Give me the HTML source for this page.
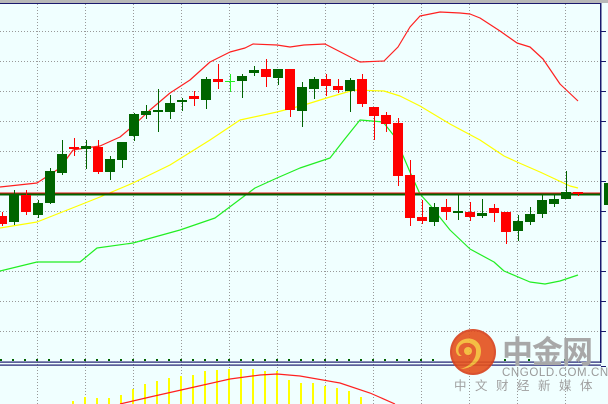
<!DOCTYPE html>
<html><head><meta charset="utf-8"><style>
html,body{margin:0;padding:0;background:#f0ffff;width:608px;height:404px;overflow:hidden}
svg{display:block}
</style></head><body>
<svg width="608" height="404" viewBox="0 0 608 404" xmlns="http://www.w3.org/2000/svg" font-family="Liberation Sans, Noto Sans CJK SC, sans-serif">
<rect width="608" height="404" fill="#f0ffff"/>
<rect x="0" y="0" width="608" height="3" fill="#b8b8b8"/>
<rect x="0" y="3" width="601" height="1" fill="#1a1a6e"/>
<g stroke="#999" stroke-width="1" stroke-dasharray="1,2">
<path d="M0 31.5H600M0 61.5H600M0 91.5H600M0 121.5H600M0 151.5H600M0 181.5H600M0 211.5H600M0 241.5H600M0 271.5H600M0 301.5H600M0 331.5H600"/>
<path d="M37.5 4V404M85.5 4V404M133.5 4V404M181.5 4V404M229.5 4V404M277.5 4V404M325.5 4V404M373.5 4V404M421.5 4V404M469.5 4V404M517.5 4V404M565.5 4V404"/>
</g>
<g fill="none" stroke-width="1.2" stroke-linejoin="round">
<polyline stroke="#ff2020" points="0,187 37,183 60,168 73,150 85,148 100,146 120,137 133,126 150,110 170,93 190,80 210,62 230,52 245,48 253,44 277,45 290,47 304,45 325,44 360,62 384,61 398,47 410,27 420,16 440,12 460,13 470,14 480,18 500,31 517,43 530,47 543,59 560,84 578,101"/>
<polyline stroke="#ffff00" points="0,228 37,222 85,203 100,197 133,183 170,165 210,140 240,120 277,112 304,105 330,97 354,90 384,91 400,96 420,106 450,124 480,140 504,156 517,162 540,172 570,186 578,188"/>
<polyline stroke="#22ee22" points="0,271 37,262 80,262 97,248 133,243 180,230 215,218 235,203 255,188 277,178 300,168 330,158 344,140 360,120 383,122 395,137 410,172 420,194 430,205 450,230 470,249 494,262 504,271 530,282 545,284 560,281 578,275"/>
</g>
<rect x="0" y="192.5" width="600" height="1" fill="#e01010"/>
<rect x="0" y="193.5" width="600" height="2" fill="#006400"/>
<g>
<g stroke-width="1">
<path stroke="#ff0000" d="M2.5 212V226M26.5 190V215M74.5 138V156M98.5 140V174M194.5 91V106M218.5 64V89M266.5 59V87M290.5 69V117M326.5 74V96M338.5 79V93M362.5 74V107M374.5 107V140M386.5 112V132M398.5 118V186M410.5 160V226M422.5 200V224M446.5 199V220M470.5 202V221M494.5 204V222M506.5 212V244M578.5 192V196"/>
<path stroke="#006400" d="M14.5 190V225M38.5 200V218M50.5 168V204M62.5 140V175M86.5 140V169M110.5 156V180M122.5 142V168M134.5 113V141M146.5 105V119M158.5 89V132M170.5 95V119M182.5 98V111M206.5 77V109M242.5 74V98M254.5 66V76M278.5 69V85M302.5 82V127M314.5 77V99M350.5 78V112M434.5 203V226M458.5 195V220M482.5 199V218M518.5 215V241M530.5 207V225M542.5 195V218M554.5 195V207M566.5 171V199"/>
<path stroke="#22ee22" d="M230.5 74V92"/>
</g>
<g fill="#ff0000">
<rect x="0" y="216" width="7" height="8"/>
<rect x="21" y="195" width="10" height="17"/>
<rect x="69" y="147" width="10" height="2"/>
<rect x="93" y="147" width="10" height="25"/>
<rect x="189" y="96" width="10" height="3"/>
<rect x="213" y="79" width="10" height="3"/>
<rect x="261" y="69" width="10" height="8"/>
<rect x="285" y="69" width="10" height="41"/>
<rect x="321" y="79" width="10" height="7"/>
<rect x="333" y="86" width="10" height="4"/>
<rect x="357" y="79" width="10" height="25"/>
<rect x="369" y="107" width="10" height="9"/>
<rect x="381" y="115" width="10" height="9"/>
<rect x="393" y="123" width="10" height="53"/>
<rect x="405" y="175" width="10" height="43"/>
<rect x="417" y="217" width="10" height="4"/>
<rect x="441" y="207" width="10" height="5"/>
<rect x="465" y="212" width="10" height="5"/>
<rect x="489" y="208" width="10" height="5"/>
<rect x="501" y="212" width="10" height="20"/>
<rect x="573" y="192" width="10" height="2"/>
</g>
<g fill="#006400">
<rect x="9" y="195" width="10" height="27"/>
<rect x="33" y="203" width="10" height="12"/>
<rect x="45" y="171" width="10" height="32"/>
<rect x="57" y="154" width="10" height="19"/>
<rect x="81" y="146" width="10" height="3"/>
<rect x="105" y="159" width="10" height="13"/>
<rect x="117" y="142" width="10" height="18"/>
<rect x="129" y="114" width="10" height="22"/>
<rect x="141" y="111" width="10" height="4"/>
<rect x="153" y="110" width="10" height="2"/>
<rect x="165" y="103" width="10" height="9"/>
<rect x="177" y="100" width="10" height="2"/>
<rect x="201" y="79" width="10" height="21"/>
<rect x="237" y="76" width="10" height="5"/>
<rect x="249" y="70" width="10" height="3"/>
<rect x="273" y="69" width="10" height="9"/>
<rect x="297" y="87" width="10" height="24"/>
<rect x="309" y="79" width="10" height="10"/>
<rect x="345" y="80" width="10" height="11"/>
<rect x="429" y="207" width="10" height="15"/>
<rect x="453" y="211" width="10" height="2"/>
<rect x="477" y="213" width="10" height="3"/>
<rect x="513" y="221" width="10" height="10"/>
<rect x="525" y="214" width="10" height="8"/>
<rect x="537" y="200" width="10" height="14"/>
<rect x="549" y="199" width="10" height="5"/>
<rect x="561" y="192" width="10" height="7"/>
<rect x="604" y="183" width="4" height="22"/>
</g>
<rect x="225" y="81" width="10" height="1" fill="#22ee22"/>
</g>
<rect x="600" y="3" width="1.5" height="360" fill="#1a1a6e"/>
<path stroke="#1a1a6e" stroke-width="1" d="M601 31.5H606M601 61.5H606M601 91.5H606M601 121.5H606M601 151.5H606M601 181.5H606M601 211.5H606M601 241.5H606M601 271.5H606M601 301.5H606M601 331.5H606M601 366.5H606"/>
<rect x="0" y="361.5" width="601" height="1.2" fill="#1a1a6e"/>
<rect x="0" y="364.5" width="601" height="1.2" fill="#1a1a6e"/>
<g fill="#006400">
<rect x="0" y="359" width="2" height="2"/><rect x="12" y="359" width="2" height="2"/><rect x="24" y="359" width="2" height="2"/><rect x="36" y="359" width="2" height="2"/><rect x="48" y="359" width="2" height="2"/><rect x="60" y="359" width="2" height="2"/><rect x="72" y="359" width="2" height="2"/><rect x="84" y="359" width="2" height="2"/><rect x="96" y="359" width="2" height="2"/><rect x="108" y="359" width="2" height="2"/><rect x="120" y="359" width="2" height="2"/><rect x="132" y="359" width="2" height="2"/><rect x="144" y="359" width="2" height="2"/><rect x="156" y="359" width="2" height="2"/><rect x="168" y="359" width="2" height="2"/><rect x="180" y="359" width="2" height="2"/><rect x="192" y="359" width="2" height="2"/><rect x="204" y="359" width="2" height="2"/><rect x="216" y="359" width="2" height="2"/><rect x="228" y="359" width="2" height="2"/><rect x="240" y="359" width="2" height="2"/><rect x="252" y="359" width="2" height="2"/><rect x="264" y="359" width="2" height="2"/><rect x="276" y="359" width="2" height="2"/><rect x="288" y="359" width="2" height="2"/><rect x="300" y="359" width="2" height="2"/><rect x="312" y="359" width="2" height="2"/><rect x="324" y="359" width="2" height="2"/><rect x="336" y="359" width="2" height="2"/><rect x="348" y="359" width="2" height="2"/><rect x="360" y="359" width="2" height="2"/><rect x="372" y="359" width="2" height="2"/><rect x="384" y="359" width="2" height="2"/><rect x="396" y="359" width="2" height="2"/><rect x="408" y="359" width="2" height="2"/><rect x="420" y="359" width="2" height="2"/><rect x="432" y="359" width="2" height="2"/><rect x="504" y="359" width="2" height="2"/><rect x="528" y="359" width="2" height="2"/><rect x="540" y="359" width="2" height="2"/><rect x="564" y="359" width="2" height="2"/>
</g>
<g stroke="#ffff00" stroke-width="2">
<path d="M73 401V404M85 397V404M97 398V404M109 398V404M121 395V404M133 389V404M145 384V404M157 381V404M169 378V404M181 376V404M193 375V404M205 371V404M217 370V404M229 369V404M241 369V404M253 369V404M265 371V404M277 371V404M289 380V404M301 383V404M313 383V404M325 386V404M337 388V404M349 391V404M361 397V404"/>
</g>
<polyline fill="none" stroke="#ff2020" stroke-width="1.2" points="120,404 150,397 190,388 230,379 260,375 277,374 300,376 340,383 370,393 395,404"/>
<g opacity="0.9">
<circle cx="473" cy="352" r="23" fill="#d8401a"/>
<circle cx="473" cy="352" r="21" fill="#e4501c"/>
<path d="M462 356c-6-3-4-12 3-13c6-1 12 3 11 9c0 8-7 15-16 17c10 0 21-6 21-18c0-9-8-14-16-12c-9 2-12 13-6 17z" fill="#f5b830"/>
<circle cx="468" cy="351" r="4" fill="#f5b830"/>
</g>
<text x="502" y="363" font-size="31" font-weight="bold" fill="#a8a8a8" letter-spacing="-1">中金网</text>
<text x="502" y="376" font-size="11.5" fill="#9a9a9a" letter-spacing="0.6">CNGOLD.COM.CN</text>
<text x="454" y="390" font-size="12.5" fill="#a0a0a0" letter-spacing="8.5">中文财经新媒体</text>
</svg>
</body></html>
